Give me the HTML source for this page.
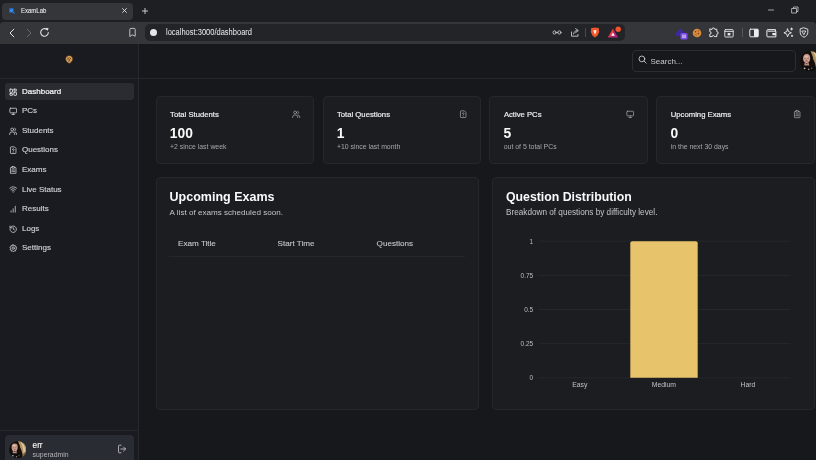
<!DOCTYPE html>
<html><head><meta charset="utf-8"><title>ExamLab</title>
<style>
*{box-sizing:border-box;margin:0;padding:0}
html,body{width:816px;height:460px;overflow:hidden;background:#17181b;font-family:"Liberation Sans",sans-serif;color:#e6e6e8}
.abs{position:absolute}
#tabbar{position:absolute;left:0;top:0;width:816px;height:22px;background:#1e1f22}
#tab{position:absolute;left:2px;top:2.5px;width:130.5px;height:17px;border-radius:4px;background:#35363a}
#tab .t{position:absolute;left:19.300px;top:3.900px;font-size:7.400px;line-height:9px;color:#e2e2e5;-webkit-text-stroke:.12px #e2e2e5;transform:scaleX(.81);transform-origin:left center}
#toolbar>svg,#toolbar>div.abs{z-index:2}
#toolbar{position:absolute;left:0;top:21.700px;width:816px;height:22.300px;background:#35363a;border-radius:3px 3px 0 0}
#url{z-index:0;position:absolute;left:145px;top:2px;width:480px;height:17px;border-radius:5px;background:#232427}
#url .t{position:absolute;left:21px;top:3.300px;font-size:8.300px;line-height:10px;color:#ededf0;transform:scaleX(.905);transform-origin:left center;white-space:nowrap}
#page{position:absolute;left:0;top:44px;width:816px;height:416px}
#side{position:absolute;left:0;top:0;width:139px;height:416px;background:#1a1b20;border-right:1px solid #27282d}
#hdr{position:absolute;left:0;top:0;width:816px;height:35px;border-bottom:1px solid #26272b}
.nav{position:absolute;left:22px;font-size:8px;color:#d3d4d8;line-height:10px;-webkit-text-stroke:.15px currentColor}
.ico{position:absolute;left:8.8px;width:8.4px;height:8.4px;stroke-width:.95}
.card{position:absolute;background:#1c1d21;border:1px solid #26272b;border-radius:4px}
.card .h{position:absolute;left:13.5px;top:13.9px;font-size:7.7px;color:#f0f0f2;-webkit-text-stroke:0.18px #f0f0f2}
.card .v{position:absolute;left:13.2px;top:29.6px;font-size:13.8px;font-weight:bold;color:#fafafa;line-height:16px}
.card .s{position:absolute;left:13.4px;top:46px;font-size:6.9px;color:#a6a7ad}
.card svg.ci{position:absolute;right:12.5px;top:13.8px;width:8.4px;height:8.4px}
.th{font-size:8.1px;color:#c3c4c9;line-height:10px;-webkit-text-stroke:.12px #c3c4c9}
svg{fill:none;stroke-linecap:round;stroke-linejoin:round}
#root{position:absolute;left:0;top:0;width:816px;height:460px;will-change:transform}
</style></head><body><div id="root">
<svg width="0" height="0" style="position:absolute"><defs>
<filter id="bl" x="-10%" y="-10%" width="120%" height="120%"><feGaussianBlur stdDeviation="0.6"/></filter>
<clipPath id="cc"><circle cx="10" cy="10" r="10"/></clipPath>
<symbol id="av" viewBox="0 0 20 20"><g clip-path="url(#cc)"><g filter="url(#bl)">
<rect x="-3" y="-3" width="26" height="26" fill="#16110f"/>
<path d="M9.800 -3H23V23H15.500C16.500 18 15.500 13 13.500 9C12 6 10.800 2 9.800 -3Z" fill="#b3935f"/>
<path d="M13 .5C17 2.500 19.500 8 18.500 13L16.500 15.500C17 10.500 15.500 5 13 .5Z" fill="#dac6a0"/>
<path d="M16 15L19.500 11.500L18.500 18L15.500 20Z" fill="#86693f"/>
<path d="M1 9C1 3 4.500 .3 8.300 .8C11.500 1.300 12.800 5 12.600 9C14.500 13 14.800 17 13 20H2C0 16 .5 12 1 9Z" fill="#130e0d"/>
<ellipse cx="6.500" cy="7.100" rx="3.500" ry="4.800" fill="#c79b89"/>
<ellipse cx="6" cy="5.600" rx="2.100" ry="1.500" fill="#ddb5a4"/>
<path d="M3 6.500C3.300 3 6.500 1.800 10 4.200C9 2.300 7.200 1.600 5.600 2C4 2.500 2.800 4.500 3 6.500Z" fill="#15100e"/>
<ellipse cx="5" cy="6.900" rx=".7" ry=".4" fill="#3a2620"/><ellipse cx="7.800" cy="6.900" rx=".7" ry=".4" fill="#3a2620"/>
<ellipse cx="6.500" cy="9.700" rx="1.100" ry=".55" fill="#a04e58"/>
<path d="M4.600 11.200L6.500 12.600L8.500 11.200L9.200 15H4Z" fill="#b58b79"/>
<path d="M0 15C3 13.800 10 13.800 14.500 15.800V23H0Z" fill="#110d0c"/>
<circle cx="4.500" cy="17" r=".9" fill="#c9bbb2"/><circle cx="8.500" cy="18" r=".8" fill="#a89890"/><circle cx="11.500" cy="16.800" r=".6" fill="#8a7a72"/>
</g></g></symbol></defs></svg>
<div id="tabbar">
  <div id="tab">
    <svg class="abs" style="left:7.400px;top:5.800px" width="6" height="6" viewBox="0 0 6 6"><rect x=".3" y=".3" width="4.400" height="4.400" fill="#1c62c4" stroke="none"/><path d="M1.200 1.200H3.600M1.200 2.400H3.600M1.200 3.600H2.600" stroke="#4aa8ff" stroke-width=".7"/><path d="M3.400 3.400L5.400 5.400" stroke="#2f86e8" stroke-width="1"/></svg>
    <div class="t">ExamLab</div>
    <svg class="abs" style="left:119.5px;top:5.6px" width="5" height="5" viewBox="0 0 5 5"><path d="M.6 .6L4.400 4.400M4.400 .6L.6 4.400" stroke="#e8e8ea" stroke-width=".9"/></svg>
  </div>
  <svg class="abs" style="left:141.500px;top:8px" width="6" height="6" viewBox="0 0 6 6"><path d="M3 .4V5.600M.4 3H5.600" stroke="#d8d8da" stroke-width=".9"/></svg>
  <svg class="abs" style="left:763.5px;top:3px" width="14" height="14" viewBox="0 0 14 14"><path d="M4.5 7H9.5" stroke="#c8c8ca" stroke-width="0.8"/></svg>
  <svg class="abs" style="left:787.5px;top:3px" width="14" height="14" viewBox="0 0 14 14"><rect x="4" y="5.5" width="4.5" height="4.5" stroke="#c8c8ca" stroke-width="0.8"/><path d="M5.5 5.5V4H10V8.5H8.5" stroke="#c8c8ca" stroke-width="0.8"/></svg>
</div>
<div id="toolbar">
  <svg class="abs" style="left:8px;top:6px" width="8" height="10" viewBox="0 0 8 10"><path d="M5.800 1.200L2 5L5.800 8.800" stroke="#e4e4e6" stroke-width="1"/></svg>
  <svg class="abs" style="left:25px;top:6px" width="8" height="10" viewBox="0 0 8 10"><path d="M2.200 1.200L6 5L2.200 8.800" stroke="#68696d" stroke-width="1"/></svg>
  <svg class="abs" style="left:39px;top:5px" width="11" height="11" viewBox="0 0 11 11"><path d="M9.3 5.5A3.8 3.8 0 1 1 7.6 2.3" stroke="#e4e4e6" stroke-width="1.1"/><path d="M6.8 0.8L9.6 1.2L8.6 4Z" fill="#e4e4e6" stroke="none"/></svg>
  <svg class="abs" style="left:128px;top:5px" width="9" height="11" viewBox="0 0 9 11"><path d="M1.800 9.200V2.400A1 1 0 0 1 2.800 1.400H6.200A1 1 0 0 1 7.200 2.400V9.200L4.500 8Z" stroke="#d0d0d3" stroke-width=".9"/></svg>
  
  <!-- url right icons -->
  <svg class="abs" style="left:552px;top:7px" width="10" height="7" viewBox="0 0 10 7" stroke="#c9cacd" stroke-width=".9"><circle cx="2.6" cy="3.5" r="1.6"/><circle cx="7.4" cy="3.5" r="1.6"/><path d="M4.2 3.5H5.8"/></svg>
  <svg class="abs" style="left:570px;top:5px" width="10" height="11" viewBox="0 0 10 11" stroke="#c9cacd" stroke-width=".9"><path d="M1.5 5V9.2H8V7.5M3.6 7C3.8 4.8 5.2 3.6 7 3.6M5.6 1.6L8.4 3.6L5.6 5.6"/></svg>
  <div class="abs" style="left:585px;top:6px;width:1px;height:9px;background:#4a4b50"></div>
  <svg class="abs" style="left:590px;top:5px" width="10" height="11" viewBox="0 0 10 11"><path d="M5 .6L7.2 .9L8 .5L9.2 2L8.8 2.9L9.3 4.8L7.6 8.6L5 10.5L2.4 8.6L.7 4.8L1.2 2.9L.8 2L2 .5L2.8 .9Z" fill="#f2572c" stroke="none"/><path d="M5 3L6.6 3.4L6 5.4L5 7.6L4 5.4L3.4 3.4Z" fill="#fff" stroke="none" opacity=".9"/></svg>
  <svg class="abs" style="left:607px;top:4px" width="15" height="13" viewBox="0 0 15 13"><path d="M1 11.5L6 2.5L11 11.5Z" fill="#b5257a" stroke="none"/><path d="M1 11.5L6 8.3L6 2.5Z" fill="#e8433c" stroke="none"/><path d="M6 6.5L7.8 9.8H4.2Z" fill="#fff" stroke="none"/><circle cx="11.2" cy="3.2" r="2.7" fill="#f0532d" stroke="none"/></svg>
  <!-- extensions -->
  <svg class="abs" style="left:675px;top:4px" width="14" height="14" viewBox="0 0 14 14"><path d="M1 7L5.5 2.5L10 7V10H1Z" fill="#3d2a9a" stroke="none"/><rect x="5.5" y="7" width="7" height="6.5" rx="1.2" fill="#7b4be0" stroke="none"/><path d="M8 9V11.7M10 9V11.7" stroke="#fff" stroke-width=".9"/></svg>
  <svg class="abs" style="left:692px;top:6px" width="10" height="10" viewBox="0 0 10 10"><circle cx="5" cy="5" r="4.3" fill="#d88a3c" stroke="none"/><circle cx="3.5" cy="3.8" r=".8" fill="#7a4516" stroke="none"/><circle cx="6.4" cy="5.6" r=".8" fill="#7a4516" stroke="none"/><circle cx="4" cy="6.8" r=".6" fill="#7a4516" stroke="none"/><circle cx="6.3" cy="2.8" r=".6" fill="#7a4516" stroke="none"/></svg>
  <svg class="abs" style="left:707.5px;top:5px" width="11" height="11" viewBox="0 0 11 11" stroke="#e6e6e8" stroke-width="1"><path d="M4 2.2A1.3 1.3 0 0 1 6.6 2.2H8.8V4.6A1.3 1.3 0 0 1 8.8 7.2V9.6H6.4A1.1 1.1 0 0 0 4.2 9.6H1.8V7.2A1.2 1.2 0 0 0 1.8 4.6V2.2Z"/></svg>
  <svg class="abs" style="left:724px;top:6px" width="10" height="10" viewBox="0 0 10 10" stroke="#e6e6e8" stroke-width=".9"><rect x=".8" y="1.6" width="8.4" height="7.4" rx=".8"/><path d="M.8 3.4H9.2"/><rect x="3.6" y="5" width="2.8" height="2.4" fill="#e6e6e8" stroke="none"/></svg>
  <div class="abs" style="left:742px;top:6px;width:1px;height:9px;background:#55565b"></div>
  <svg class="abs" style="left:749px;top:6px" width="10" height="10" viewBox="0 0 10 10" stroke="#ececee" stroke-width="1"><rect x=".8" y="1.2" width="8.4" height="7.6" rx=".8"/><rect x="5" y="1.2" width="4.2" height="7.6" fill="#ececee" stroke="none"/></svg>
  <svg class="abs" style="left:766px;top:6px" width="11" height="10" viewBox="0 0 11 10" stroke="#ececee" stroke-width="1"><path d="M9.5 3V1.6H1.8A.9.9 0 0 0 .9 2.5V8A.9.9 0 0 0 1.8 8.9H9.9V3.2H2"/><rect x="6.4" y="5" width="3.5" height="2.2" fill="#ececee" stroke="none"/></svg>
  <svg class="abs" style="left:783px;top:5px" width="11" height="11" viewBox="0 0 11 11" stroke="#ececee" stroke-width=".9"><path d="M4.6 2L5.6 4.6L8.4 5.8L5.6 7L4.6 9.8L3.6 7L.9 5.8L3.6 4.6Z"/><path d="M8.6 1V3M7.6 2H9.6M9 8.2V9.6M8.3 8.9H9.7"/></svg>
  <svg class="abs" style="left:799px;top:5px" width="10" height="11" viewBox="0 0 10 11" stroke="#ececee" stroke-width=".9"><path d="M5 .9L8.8 2.2V5.4C8.8 7.8 7.2 9.4 5 10.2C2.8 9.4 1.2 7.8 1.2 5.4V2.2Z"/><path d="M3.2 4H6.8L5 7.4Z" stroke-width=".8"/></svg>
  <div id="url">
    <div class="abs" style="left:5.200px;top:5.200px;width:7px;height:7px;border-radius:50%;background:#e6e6e8"></div>
    <div class="t">localhost:3000/dashboard</div>
  </div>
</div>
<div id="page">
  <div id="side">
<div class="abs" style="left:4.5px;top:39px;width:129.5px;height:16.5px;border-radius:3px;background:#2a2c32"></div>
<svg class="abs" style="left:65.300px;top:11.300px" width="8.400" height="8.800" viewBox="0 0 9 9.400"><path d="M4.500 .5C6.500 .5 8.400 2.200 8.400 4.200C8.400 5.800 6.400 8.800 4.500 8.900C2.600 8.800 .6 5.800 .6 4.200C.6 2.200 2.500 .5 4.500 .5Z" fill="#dcaa66" stroke="#4a2c10" stroke-width=".8"/><path d="M2.600 3L3.900 4.600M3.900 3L2.600 4.600M5.100 3L6.400 4.600M6.400 3L5.100 4.600M4.500 5.400L3.700 6.800M4.500 5.400L5.300 6.800" stroke="#5a3208" stroke-width=".7"/></svg>
<svg class="ico" style="top:43.50px" viewBox="0 0 10 10" stroke="#f4f4f6" stroke-width="1.05"><rect x="1.100" y="1.400" width="3.100" height="3.700" rx=".4"/><rect x="5.800" y="1.400" width="3.100" height="2.100" rx=".4"/><rect x="5.800" y="5" width="3.100" height="3.700" rx=".4"/><rect x="1.100" y="6.600" width="3.100" height="2.100" rx=".4"/></svg><div class="nav" style="top:42.60px;color:#f4f4f6;-webkit-text-stroke:.22px #f4f4f6">Dashboard</div>
<svg class="ico" style="top:63.08px" viewBox="0 0 10 10" stroke="#d0d1d5" stroke-width=".85"><rect x="1" y="1.5" width="8" height="5.5" rx=".8"/><path d="M3.5 9H6.5M5 7V9"/></svg><div class="nav" style="top:62.18px;color:#d0d1d5">PCs</div>
<svg class="ico" style="top:82.66px" viewBox="0 0 10 10" stroke="#d0d1d5" stroke-width=".85"><circle cx="3.8" cy="3" r="1.7"/><path d="M0.8 9V8.2A2.2 2.2 0 0 1 3 6H4.6A2.2 2.2 0 0 1 6.8 8.2V9"/><path d="M6.8 1.4A1.7 1.7 0 0 1 6.8 4.6M9.2 9V8.2A2.2 2.2 0 0 0 7.6 6.1"/></svg><div class="nav" style="top:81.76px;color:#d0d1d5">Students</div>
<svg class="ico" style="top:102.24px" viewBox="0 0 10 10" stroke="#d0d1d5" stroke-width=".85"><path d="M6 1H2.5A.8.8 0 0 0 1.7 1.8V8.2A.8.8 0 0 0 2.5 9H7.5A.8.8 0 0 0 8.3 8.2V3.3Z"/><path d="M4 4.2A1 1 0 0 1 6 4.4C6 5 5 5.2 5 5.9M5 7.3V7.35"/></svg><div class="nav" style="top:101.34px;color:#d0d1d5">Questions</div>
<svg class="ico" style="top:121.82px" viewBox="0 0 10 10" stroke="#d0d1d5" stroke-width=".85"><rect x="3.3" y=".8" width="3.4" height="1.8" rx=".5"/><path d="M6.7 1.7H7.5A.8.8 0 0 1 8.3 2.5V8.4A.8.8 0 0 1 7.5 9.2H2.5A.8.8 0 0 1 1.7 8.4V2.5A.8.8 0 0 1 2.5 1.7H3.3"/><path d="M3.3 4.8H6.7M3.3 6.8H6.7"/></svg><div class="nav" style="top:120.92px;color:#d0d1d5">Exams</div>
<svg class="ico" style="top:141.40px" viewBox="0 0 10 10" stroke="#d0d1d5" stroke-width=".85"><path d="M1 3.8A6 6 0 0 1 9 3.8M2.3 5.4A4 4 0 0 1 7.7 5.4M3.7 7A2 2 0 0 1 6.3 7M5 8.6V8.65"/></svg><div class="nav" style="top:140.50px;color:#d0d1d5">Live Status</div>
<svg class="ico" style="top:160.98px" viewBox="0 0 10 10" stroke="#d0d1d5" stroke-width=".85"><path d="M2.5 8.5V7M5 8.5V4.5M7.5 8.5V1.5"/></svg><div class="nav" style="top:160.08px;color:#d0d1d5">Results</div>
<svg class="ico" style="top:180.56px" viewBox="0 0 10 10" stroke="#d0d1d5" stroke-width=".85"><path d="M1.2 5A3.8 3.8 0 1 0 2.4 2.3L1.2 3.4M1.2 1.2V3.4H3.4M5 3V5L6.5 5.8"/></svg><div class="nav" style="top:179.66px;color:#d0d1d5">Logs</div>
<svg class="ico" style="top:200.14px" viewBox="0 0 10 10" stroke="#d0d1d5" stroke-width=".85"><circle cx="5" cy="5" r="1.4"/><path d="M5 .8L5.8 2.1L7.3 1.6L7.5 3.1L9 3.5L8.3 4.9L9.2 6.1L7.8 6.8L7.8 8.3L6.3 8.1L5.4 9.3L4.4 8.2L2.9 8.6L2.7 7.1L1.2 6.7L1.9 5.3L1 4.1L2.4 3.4L2.4 1.9L3.9 2.1Z"/></svg><div class="nav" style="top:199.24px;color:#d0d1d5">Settings</div>
<div class="abs" style="left:0;top:386px;width:138px;height:1px;background:#26272b"></div>
<div class="abs" style="left:4.5px;top:391.2px;width:129.5px;height:30px;border-radius:4px;background:#2a2c33"></div>
<svg class="abs" style="left:8.9px;top:396.7px" width="17.4" height="17.4"><use href="#av"/></svg>
<div class="abs" style="left:32.6px;top:396.7px;font-size:8.2px;color:#f4f4f6;line-height:10px;-webkit-text-stroke:.15px #f4f4f6">err</div>
<div class="abs" style="left:32.6px;top:406.7px;font-size:6.9px;color:#b4b5ba;line-height:8px">superadmin</div>
<svg class="abs" style="left:117px;top:399.5px" width="10" height="10" viewBox="0 0 10 10" stroke="#c4c5c9" stroke-width=".85"><path d="M4 1.2H2.4A.9.9 0 0 0 1.5 2.1V7.9A.9.9 0 0 0 2.4 8.8H4M6.6 3L8.6 5L6.6 7M8.6 5H3.8"/></svg>
</div>
  <div id="hdr">
<div class="abs" style="left:632px;top:5.8px;width:163.8px;height:22.3px;border:1px solid #2c2d32;border-radius:4px;background:#17181b"></div>
<svg class="abs" style="left:638.2px;top:11.4px" width="9" height="9" viewBox="0 0 9 9" stroke="#d0d1d5" stroke-width=".85"><circle cx="3.9" cy="3.9" r="2.9"/><path d="M6.1 6.1L8.2 8.2"/></svg>
<div class="abs" style="left:650.5px;top:12.7px;font-size:8px;line-height:10px;color:#c9cace">Search...</div>
<svg class="abs" style="left:800.3px;top:7px" width="20.4" height="20.4"><use href="#av"/></svg>
</div>
<div class="card" style="left:155.6px;top:51.6px;width:158.6px;height:68.4px"><div class="h">Total Students</div><svg class="ci" viewBox="0 0 10 10" stroke="#a9aab0" stroke-width=".85"><circle cx="3.8" cy="3" r="1.7"/><path d="M0.8 9V8.2A2.2 2.2 0 0 1 3 6H4.6A2.2 2.2 0 0 1 6.8 8.2V9"/><path d="M6.8 1.4A1.7 1.7 0 0 1 6.8 4.6M9.2 9V8.2A2.2 2.2 0 0 0 7.6 6.1"/></svg><div class="v">100</div><div class="s">+2 since last week</div></div>
<div class="card" style="left:322.5px;top:51.6px;width:158.6px;height:68.4px"><div class="h">Total Questions</div><svg class="ci" viewBox="0 0 10 10" stroke="#a9aab0" stroke-width=".85"><path d="M6 1H2.5A.8.8 0 0 0 1.7 1.8V8.2A.8.8 0 0 0 2.5 9H7.5A.8.8 0 0 0 8.3 8.2V3.3Z"/><path d="M4 4.2A1 1 0 0 1 6 4.4C6 5 5 5.2 5 5.9M5 7.3V7.35"/></svg><div class="v">1</div><div class="s">+10 since last month</div></div>
<div class="card" style="left:489.4px;top:51.6px;width:158.6px;height:68.4px"><div class="h">Active PCs</div><svg class="ci" viewBox="0 0 10 10" stroke="#a9aab0" stroke-width=".85"><rect x="1" y="1.5" width="8" height="5.5" rx=".8"/><path d="M3.5 9H6.5M5 7V9"/></svg><div class="v">5</div><div class="s">out of 5 total PCs</div></div>
<div class="card" style="left:656.3px;top:51.6px;width:158.6px;height:68.4px"><div class="h">Upcoming Exams</div><svg class="ci" viewBox="0 0 10 10" stroke="#a9aab0" stroke-width=".85"><rect x="3.3" y=".8" width="3.4" height="1.8" rx=".5"/><path d="M6.7 1.7H7.5A.8.8 0 0 1 8.3 2.5V8.4A.8.8 0 0 1 7.5 9.2H2.5A.8.8 0 0 1 1.7 8.4V2.5A.8.8 0 0 1 2.5 1.7H3.3"/><path d="M3.3 4.8H6.7M3.3 6.8H6.7"/></svg><div class="v">0</div><div class="s">in the next 30 days</div></div>
<div class="card" style="left:155.6px;top:132.8px;width:323.5px;height:233.2px">
<div class="abs" style="left:13px;top:12.4px;font-size:12.5px;font-weight:bold;color:#fafafa;line-height:15px">Upcoming Exams</div>
<div class="abs" style="left:13px;top:30.5px;font-size:8.1px;color:#c3c4c9;line-height:10px">A list of exams scheduled soon.</div>
<div class="abs th" style="left:21.5px;top:61.2px">Exam Title</div>
<div class="abs th" style="left:121px;top:61.2px">Start Time</div>
<div class="abs th" style="left:220px;top:61.2px">Questions</div>
<div class="abs" style="left:12.6px;top:78.6px;width:296px;height:1px;background:#26272b"></div>
</div>
<div class="card" style="left:492px;top:132.8px;width:323px;height:233.2px">
<div class="abs" style="left:13px;top:12.2px;font-size:12.3px;font-weight:bold;color:#fafafa;line-height:15px">Question Distribution</div>
<div class="abs" style="left:13px;top:30.2px;font-size:8.2px;color:#c3c4c9;line-height:10px">Breakdown of questions by difficulty level.</div>
<svg class="abs" style="left:0;top:0" width="322" height="232" viewBox="0 0 322 232" font-family="Liberation Sans, sans-serif">
<g transform="translate(-0.8,-1.3)">
<g stroke="#26272c" stroke-width="1">
<path d="M46.5 64.5H298M46.5 98.650H298M46.5 132.800H298M46.5 166.950H298M46.5 201.100H298"/></g>
<path d="M138.100 201.100V66.500A2 2 0 0 1 140.100 64.500H203.500A2 2 0 0 1 205.500 66.500V201.100Z" fill="#e7c46b" stroke="none"/>
<g fill="#bcbdc2" font-size="6.500" text-anchor="end" stroke="none">
<text x="41" y="66.900">1</text><text x="41" y="101.050">0.75</text><text x="41" y="135.200">0.5</text><text x="41" y="169.350">0.25</text><text x="41" y="203.500">0</text></g>
<g fill="#c0c1c6" font-size="6.800" text-anchor="middle" stroke="none">
<text x="87.600" y="210.700">Easy</text><text x="171.700" y="210.700">Medium</text><text x="255.800" y="210.700">Hard</text></g>
</g>
</svg>
</div>

</div>
</div></body></html>
